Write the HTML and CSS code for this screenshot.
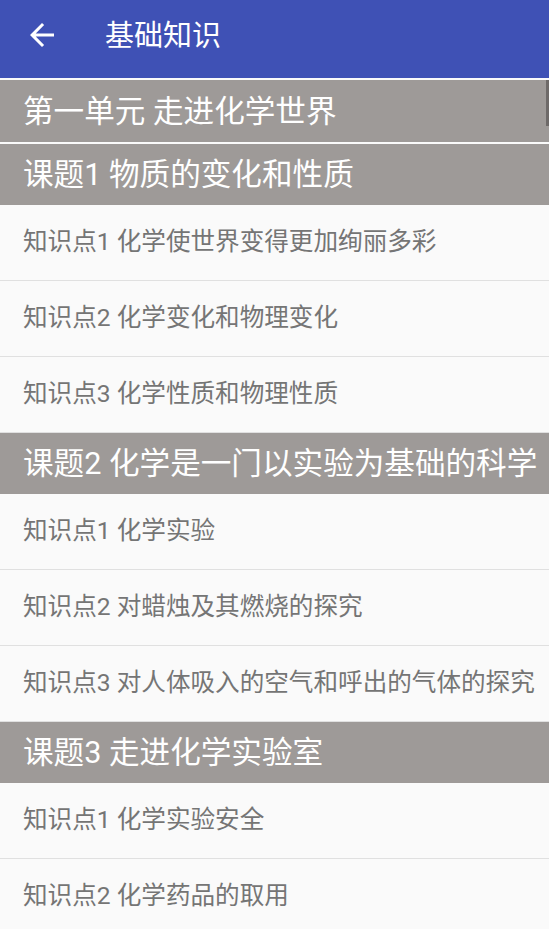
FILE: index.html
```html
<!DOCTYPE html>
<html lang="zh-CN">
<head>
<meta charset="utf-8">
<title>基础知识</title>
<link rel="stylesheet" href="styles.css">
</head>
<body>
<header class="appbar">
  <span class="back">
    <svg viewBox="0 0 24 24" width="36" height="36"><path fill="#fff" d="M20 11H7.83l5.59-5.59L12 4l-8 8 8 8 1.41-1.41L7.83 13H20v-2z"/></svg>
  </span>
  <h1 class="title">基础知识</h1>
</header>
<main class="list">
  <div class="scrollbar"></div>
  <div class="unit">第一单元 走进化学世界</div>
  <div class="topic">课题1 物质的变化和性质</div>
  <div class="item">知识点1 化学使世界变得更加绚丽多彩</div>
  <div class="item">知识点2 化学变化和物理变化</div>
  <div class="item">知识点3 化学性质和物理性质</div>
  <div class="topic">课题2 化学是一门以实验为基础的科学</div>
  <div class="item">知识点1 化学实验</div>
  <div class="item">知识点2 对蜡烛及其燃烧的探究</div>
  <div class="item">知识点3 对人体吸入的空气和呼出的气体的探究</div>
  <div class="topic">课题3 走进化学实验室</div>
  <div class="item">知识点1 化学实验安全</div>
  <div class="item">知识点2 化学药品的取用</div>
</main>
</body>
</html>
```
FILE: styles.css
```css
html, body {
  margin: 0;
  padding: 0;
}
body {
  width: 549px;
  height: 929px;
  overflow: hidden;
  background: #fafafa;
  font-family: Roboto, "Noto Sans CJK SC", sans-serif;
}
.appbar {
  height: 78px;
  background: #3f51b5;
  display: flex;
  align-items: center;
  border-bottom: 2px solid #fafafa;
}
.back {
  width: 36px;
  height: 36px;
  margin-left: 24px;
  margin-top: -8px;
  display: flex;
}
.title {
  margin: -12px 0 0 45px;
  font-size: 29px;
  font-weight: 400;
  color: #fff;
}
.list {
  position: relative;
}
.scrollbar {
  position: absolute;
  right: 0;
  top: 0;
  width: 3px;
  height: 46px;
  background: #6e6a69;
}
.unit, .topic {
  background: #9e9a98;
  color: #fff;
  font-size: 30.6px;
  padding-left: 23px;
  display: flex;
  align-items: center;
  white-space: nowrap;
  box-sizing: border-box;
  padding-bottom: 4px;
}
.unit {
  height: 64px;
  border-bottom: 2px solid #fafafa;
}
.topic {
  height: 61px;
  padding-bottom: 6px;
}
.item {
  border-bottom: 1px solid #e0e0e0;
  color: #757575;
  font-size: 24.6px;
  padding-left: 23px;
  display: flex;
  align-items: center;
  padding-bottom: 7px;
  box-sizing: border-box;
  height: 76px;
  white-space: nowrap;
}
```
